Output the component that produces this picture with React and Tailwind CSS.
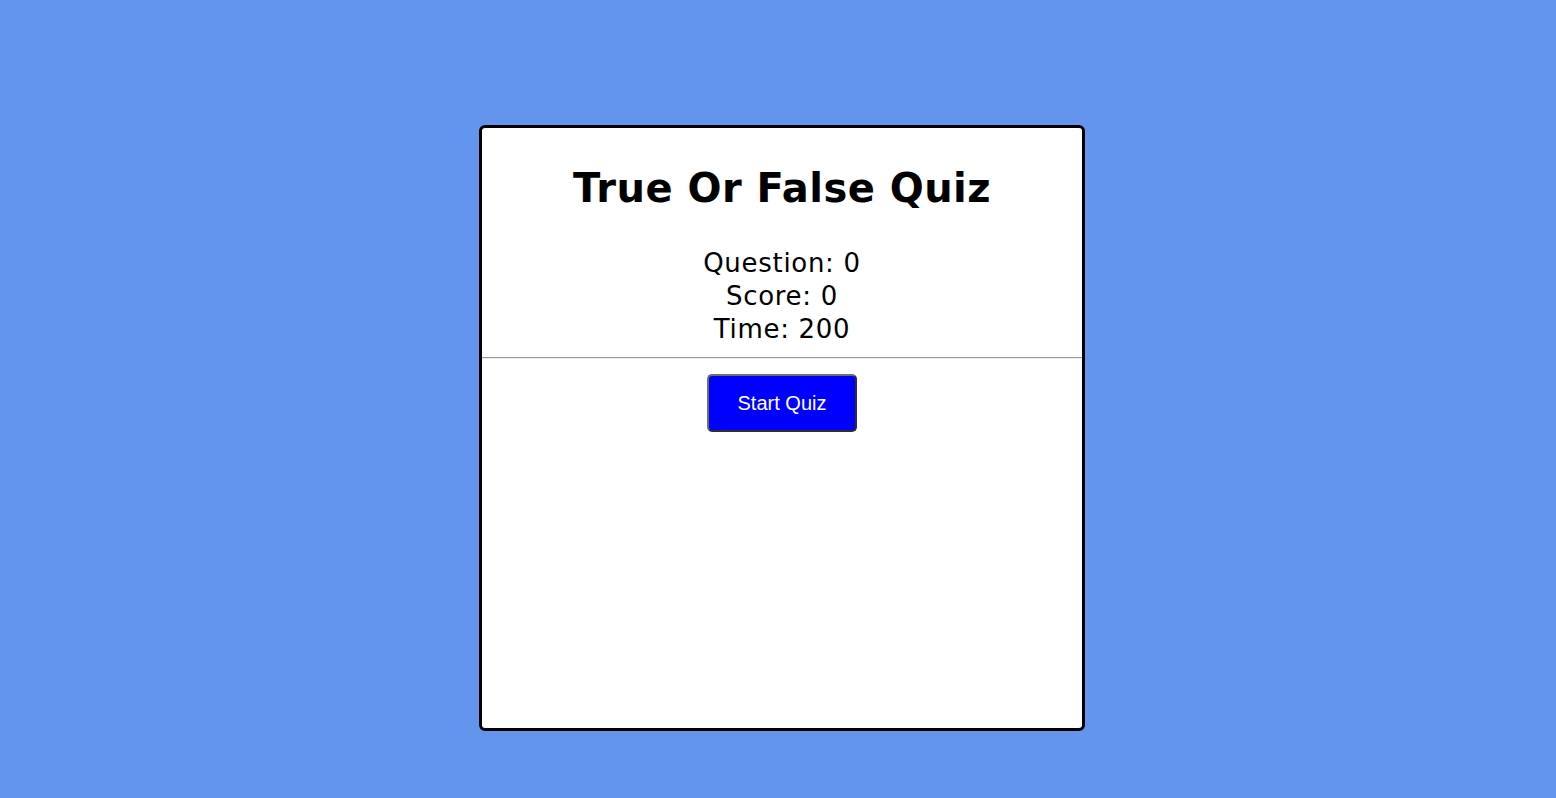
export default function App() {
  const stats = [
    { label: "Question", value: 0 },
    { label: "Score", value: 0 },
    { label: "Time", value: 200 },
  ];

  return (
    <div className="min-h-screen w-full bg-[#6495ed] pl-2 pt-[125px]">
      <div className="mx-auto flex h-[606px] w-[606px] flex-col rounded-[6px] border-[3px] border-black bg-white">
        <h1 className="pt-[36px] text-center font-['DejaVu_Sans',Verdana,sans-serif] text-[40px] font-bold leading-[48px] tracking-[0.45px] text-black">
          True Or False Quiz
        </h1>
        <div className="mt-[35px] flex flex-col items-center font-['DejaVu_Sans',Verdana,sans-serif] text-[26px] leading-[33px] tracking-[0.7px] text-black">
          {stats.map((s) => (
            <p key={s.label}>
              {s.label}: {s.value}
            </p>
          ))}
        </div>
        <div className="mt-[11px] border-t border-b border-t-[#9a9a9a] border-b-[#eeeeee]" />
        <div className="mt-[15px] flex justify-center">
          <button className="h-[58px] w-[150px] rounded-[5px] border-2 border-t-[#6e6e6e] border-l-[#6e6e6e] border-r-[#2f2f2f] border-b-[#2f2f2f] bg-[#0000ff] font-['Liberation_Sans',Arial,sans-serif] text-[20px] text-white">
            Start Quiz
          </button>
        </div>
      </div>
    </div>
  );
}
